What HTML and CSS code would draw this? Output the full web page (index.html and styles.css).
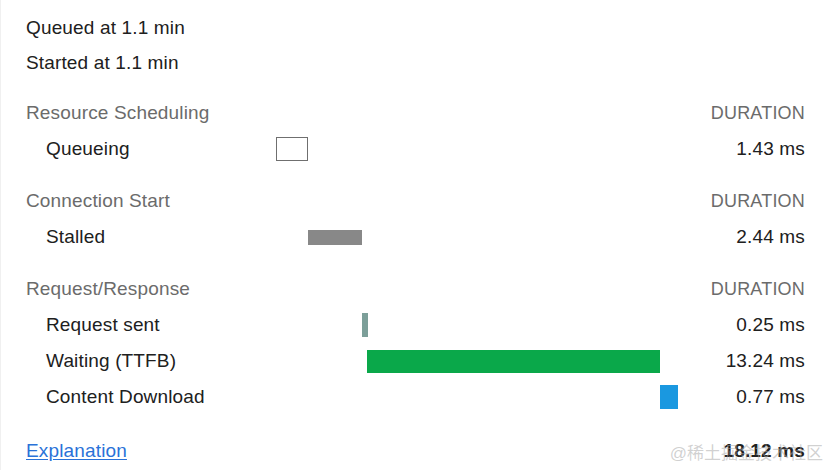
FILE: index.html
```html
<!DOCTYPE html>
<html>
<head>
<meta charset="utf-8">
<link rel="stylesheet" href="styles.css">
</head>
<body>
<div class="panel">
  <div class="meta">
    <div class="row"><span class="label">Queued at 1.1 min</span></div>
    <div class="row"><span class="label">Started at 1.1 min</span></div>
  </div>

  <div class="section first">
    <div class="row head"><span class="label">Resource Scheduling</span><span class="track"></span><span class="dur">DURATION</span></div>
    <div class="row item"><span class="label">Queueing</span><span class="track"><span class="bar queueing" style="margin-left:0%;width:7.96%"></span></span><span class="dur">1.43 ms</span></div>
  </div>

  <div class="section">
    <div class="row head"><span class="label">Connection Start</span><span class="track"></span><span class="dur">DURATION</span></div>
    <div class="row item"><span class="label">Stalled</span><span class="track"><span class="bar stalled" style="margin-left:7.96%;width:13.43%"></span></span><span class="dur">2.44 ms</span></div>
  </div>

  <div class="section">
    <div class="row head"><span class="label">Request/Response</span><span class="track"></span><span class="dur">DURATION</span></div>
    <div class="row item"><span class="label">Request sent</span><span class="track"><span class="bar sending" style="margin-left:21.39%;width:1.49%"></span></span><span class="dur">0.25 ms</span></div>
    <div class="row item"><span class="label">Waiting (TTFB)</span><span class="track"><span class="bar waiting" style="margin-left:22.64%;width:72.89%"></span></span><span class="dur">13.24 ms</span></div>
    <div class="row item"><span class="label">Content Download</span><span class="track"><span class="bar download" style="margin-left:95.52%;width:4.48%"></span></span><span class="dur">0.77 ms</span></div>
  </div>

  <div class="section footer">
    <div class="row"><a class="label link" href="#">Explanation</a><span class="track"></span><span class="dur total">18.12 ms</span></div>
  </div>

  <div class="watermark">@稀土掘金技术社区</div>
</div>
</body>
</html>
```

FILE: styles.css
```css
html, body {
  margin: 0;
  padding: 0;
  background: #ffffff;
}

body {
  font-family: "Liberation Sans", Arial, "Noto Sans CJK SC", sans-serif;
  font-size: 19px;
  letter-spacing: 0.15px;
  color: #202020;
}

.panel {
  position: relative;
  width: 830px;
  height: 470px;
  box-sizing: border-box;
  padding: 10px 25px 0 26px;
  overflow: hidden;
  box-shadow: inset 1px 0 0 #f0f0f0;
}

.row {
  display: grid;
  grid-template-columns: 250px 402px 1fr;
  align-items: center;
  height: 36px;
  white-space: nowrap;
}

.meta .row {
  height: 35.5px;
}

.section {
  margin-top: 16px;
}

.section.first {
  margin-top: 14px;
}

.section.footer {
  margin-top: 18px;
}

.head {
  color: #6b6b6b;
}

.item .label {
  padding-left: 20px;
}

.track {
  display: block;
}

.bar {
  display: block;
  box-sizing: border-box;
}

.queueing {
  height: 24px;
  border: 1px solid #6f6f6f;
  background: #ffffff;
}

.stalled {
  height: 15px;
  background: #888888;
}

.sending {
  height: 24px;
  background: #7c9f99;
}

.waiting {
  height: 23px;
  background: #0aa84a;
}

.download {
  height: 24px;
  background: #1a98e0;
}

.dur {
  text-align: right;
}

.head .dur {
  color: #6b6b6b;
  font-size: 18px;
  letter-spacing: 0.2px;
}

.link {
  color: #2a72d8;
  text-decoration: underline;
  text-underline-offset: 2px;
}

.total {
  font-weight: bold;
}

.watermark {
  position: absolute;
  right: 7px;
  bottom: 6px;
  font-size: 17px;
  letter-spacing: 0;
  color: rgba(170, 170, 170, 0.55);
  pointer-events: none;
}
```
